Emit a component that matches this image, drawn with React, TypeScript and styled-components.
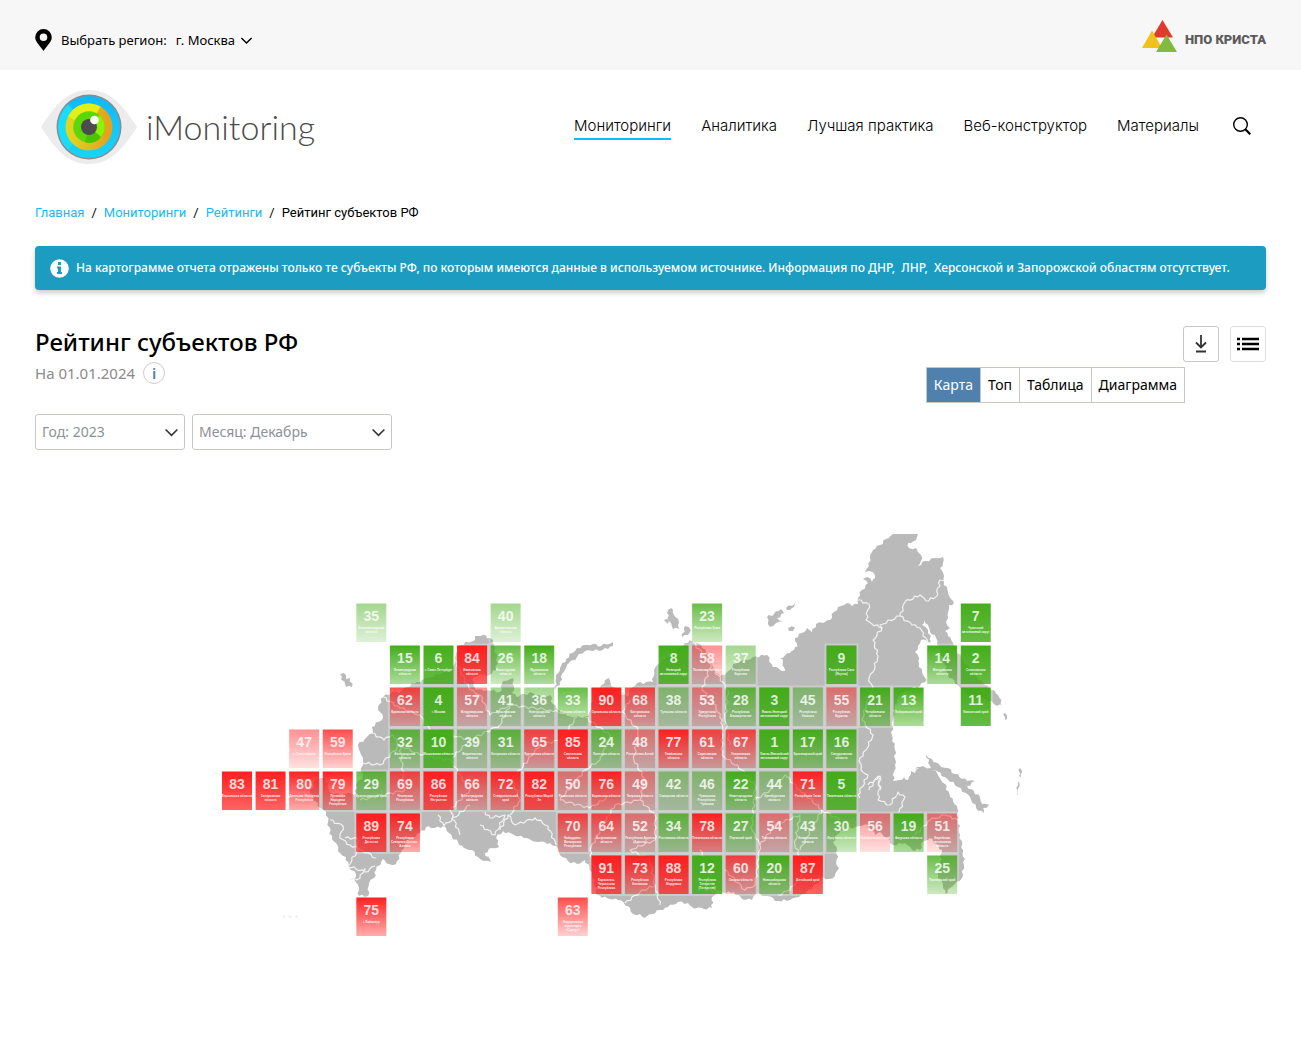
import React from "react";
import styled, { createGlobalStyle } from "styled-components";

const sans = `"Noto Sans", "Open Sans", sans-serif`;

const GlobalStyle = createGlobalStyle`
  *, *::before, *::after { box-sizing: border-box; }
  body { margin: 0; background: #fff; color: #000; font-family: ${sans}; font-size: 13px; line-height: 20px; }
  button, select { font: inherit; color: inherit; }
  a { color: inherit; text-decoration: none; }
`;

const TopBar = styled.div`
  display: flex;
  align-items: center;
  justify-content: space-between;
  height: 70px;
  padding: 0 35px;
  background: #f7f7f7;
`;

const Region = styled.div`
  display: flex;
  align-items: center;
  padding-top: 10px;
  svg { flex: none; }
  label { margin: 0 9px; }
`;

const RegionSelect = styled.span`
  display: flex;
  align-items: center;
  gap: 4px;
  select {
    appearance: none;
    border: 0;
    padding: 0;
    background: transparent;
  }
`;

const Company = styled.a`
  display: flex;
  align-items: center;
  gap: 8px;
  padding-top: 2px;
  color: #5c5c5c;
  font: 900 13px/36px Roboto, "Liberation Sans", sans-serif;
  span { padding-top: 8px; }
`;

const Header = styled.header`
  display: flex;
  align-items: center;
  justify-content: space-between;
  height: 114px;
  padding: 0 35px 0 41px;
`;

const Brand = styled.a`
  display: flex;
  align-items: center;
  gap: 8px;
  color: #4b4b4b;
  font: 300 34px/48px Lato, ${sans};
`;

const Nav = styled.nav`
  display: flex;
  align-items: center;
  gap: 30px;
  padding-bottom: 2px;
`;

const NavLink = styled.a<{ $active?: boolean }>`
  padding-top: 2px;
  border-bottom: 2px solid ${(p) => (p.$active ? "#00bfff" : "transparent")};
  font: 300 15px/24px Inter, ${sans};
`;

const SearchButton = styled.button`
  display: flex;
  width: 26px;
  height: 26px;
  margin-right: 11px;
  padding: 4px;
  border: 0;
  background: none;
`;

const Main = styled.main`
  padding: 19px 35px 40px;
`;

const Crumbs = styled.nav`
  display: flex;
  gap: 7px;
  font-family: Roboto, ${sans};
  a { color: #1cb8f0; }
`;

const Notice = styled.div`
  display: flex;
  align-items: center;
  gap: 7px;
  min-height: 44px;
  margin-top: 23px;
  padding: 0 15px;
  border-radius: 4px;
  background: #1c9cc1;
  box-shadow: 0 3px 5px rgba(0, 0, 0, 0.2);
  color: #fff;
  font-size: 12px;
  font-weight: 500;
  svg { flex: none; }
  p { margin: 0; }
`;

const Heading = styled.div`
  display: flex;
  justify-content: space-between;
  margin-top: 36px;
`;

const Title = styled.h1`
  margin: 0;
  font-size: 24px;
  line-height: 32px;
  font-weight: 500;
`;

const Subtitle = styled.div`
  display: flex;
  align-items: center;
  gap: 8px;
  margin-top: 3px;
  color: #8a8a8a;
  font-size: 15px;
  line-height: 24px;
`;

const InfoButton = styled.button`
  width: 22px;
  height: 22px;
  padding: 0;
  border: 1px solid #ccc;
  border-radius: 50%;
  background: #fff;
  color: #4d7fae;
  font-size: 15px;
  font-weight: 600;
  line-height: 20px;
`;

const Tools = styled.div`
  display: flex;
  flex-direction: column;
  align-items: flex-end;
  gap: 5px;
`;

const ToolButtons = styled.div`
  display: flex;
  gap: 11px;
`;

const ToolButton = styled.button<{ $light?: boolean }>`
  display: flex;
  align-items: center;
  justify-content: center;
  width: 36px;
  height: 36px;
  padding: 0;
  border: 1px solid ${(p) => (p.$light ? "#ddd" : "#c8c8c8")};
  border-radius: 3px;
  background: #fff;
`;

const Tabs = styled.div`
  display: flex;
  margin-right: 81px;
  border: 1px solid #c9c8c0;
`;

const Tab = styled.button<{ $active?: boolean }>`
  height: 34px;
  padding: 0 7px;
  border: 0;
  background: ${(p) => (p.$active ? "#5080ae" : "#fff")};
  color: ${(p) => (p.$active ? "#fff" : "#000")};
  font-size: 14px;
  & + & { border-left: 1px solid #c9c8c0; }
`;

const Filters = styled.div`
  display: flex;
  gap: 7px;
  margin-top: 11px;
`;

const Filter = styled.span<{ $width: number }>`
  display: grid;
  align-items: center;
  width: ${(p) => p.$width}px;
  select, svg { grid-area: 1 / 1; }
  svg { justify-self: end; margin-right: 6px; pointer-events: none; }
  select {
    appearance: none;
    width: 100%;
    height: 36px;
    padding: 0 6px;
    border: 1px solid #c9c8c0;
    border-radius: 3px;
    background: #fff;
    color: #8e9196;
    font-size: 14px;
  }
`;

const MapFigure = styled.figure`
  display: flex;
  justify-content: center;
  margin: 80px 0 0;
  svg { width: 100%; max-width: 860px; height: auto; }
`;

const Rank = styled.text`
  fill: rgba(255, 255, 255, 0.82);
  font: bold 14px "Liberation Sans", sans-serif;
  text-anchor: middle;
`;

const RegionName = styled.text`
  fill: rgba(255, 255, 255, 0.9);
  font: bold 3px "Liberation Sans", sans-serif;
  text-anchor: middle;
`;

const Chevron = ({ size, color }: { size: number; color: string }) => (
  <svg width={size} height={size} viewBox="0 0 14 14" fill="none" stroke={color} strokeWidth="1.5" aria-hidden="true">
    <path d="M1.5 4.2 7 9.7l5.5-5.5" />
  </svg>
);

const EyeLogo = () => (
  <svg width="97" height="76" viewBox="0 0 97 76" aria-hidden="true">
    <defs>
      <linearGradient id="iris" x1="0" y1="0" x2="1" y2="0">
        <stop offset="0.1" stopColor="#dfd51e" />
        <stop offset="0.9" stopColor="#e3a31e" />
      </linearGradient>
      <linearGradient id="rim" x1="0" y1="0" x2="0" y2="1">
        <stop offset="0" stopColor="#10b8fa" />
        <stop offset="1" stopColor="#18d4f8" />
      </linearGradient>
    </defs>
    <path d="M0 38C12 20 24 1 48 1s36 19 48 37C84 56 72 75 48 75S12 56 0 38Z" fill="#ececec" />
    <circle cx="48" cy="38" r="32.5" fill="#8a8a8a" />
    <circle cx="48" cy="38" r="31" fill="url(#rim)" />
    <path d="M48 38 27 15.200A31 31 0 0 0 27 60.800Z" fill="#18dcf8" />
    <circle cx="48" cy="38" r="23.500" fill="url(#iris)" />
    <path d="M48 38 27 27.500A23.500 23.500 0 0 1 59.500 17.500Z" fill="#e4ee18" />
    <circle cx="48" cy="38" r="15.700" fill="#5cd80a" />
    <path d="M48 38 58.500 26.300A15.700 15.700 0 0 1 60 48Z" fill="#8af500" />
    <path d="M48 38 60 48A15.700 15.700 0 0 1 44 53.200Z" fill="#48c400" />
    <circle cx="48" cy="38" r="8" fill="#4c4c4c" />
    <circle cx="53.500" cy="31" r="4.300" fill="#fff" />
  </svg>
);

type Cell = [number, string];
type Run = { row: number; col: number; cells: Cell[] };

const runs: Run[] = [
  { row: 0, col: 4, cells: [[35, "Калининградская|область"]] },
  { row: 0, col: 8, cells: [[40, "Архангельская|область"]] },
  { row: 0, col: 14, cells: [[23, "Республика Коми"]] },
  { row: 0, col: 22, cells: [[7, "Чукотский|автономный округ"]] },
  { row: 1, col: 5, cells: [[15, "Ленинградская|область"], [6, "г. Санкт-Петербург"], [84, "Ивановская|область"], [26, "Вологодская|область"], [18, "Мурманская|область"]] },
  { row: 1, col: 13, cells: [[8, "Ненецкий|автономный округ"], [58, "Псковская область"], [37, "Республика|Карелия"]] },
  { row: 1, col: 18, cells: [[9, "Республика Саха|(Якутия)"]] },
  { row: 1, col: 21, cells: [[14, "Магаданская|область"], [2, "Сахалинская|область"]] },
  { row: 2, col: 5, cells: [[62, "Брянская область"], [4, "г. Москва"], [57, "Владимирская|область"], [41, "Ярославская|область"], [36, "Новгородская|область"], [33, "Курская область"], [90, "Орловская область"], [68, "Костромская|область"], [38, "Тульская область"], [53, "Удмуртская|Республика"], [28, "Республика|Башкортостан"], [3, "Ямало-Ненецкий|автономный округ"], [45, "Республика|Хакасия"], [55, "Республика|Бурятия"], [21, "Челябинская|область"], [13, "Хабаровский край"]] },
  { row: 2, col: 22, cells: [[11, "Камчатский край"]] },
  { row: 3, col: 2, cells: [[47, "г. Севастополь"], [59, "Республика Крым"]] },
  { row: 3, col: 5, cells: [[32, "Белгородская|область"], [10, "Московская область"], [39, "Воронежская|область"], [31, "Калужская область"], [65, "Курганская область"], [85, "Смоленская|область"], [24, "Липецкая область"], [48, "Республика Алтай"], [77, "Тамбовская|область"], [61, "Саратовская|область"], [67, "Ульяновская|область"], [1, "Ханты-Мансийский|автономный округ"], [17, "Красноярский край"], [16, "Свердловская|область"]] },
  { row: 4, col: 0, cells: [[83, "Херсонская область"], [81, "Запорожская|область"], [80, "Донецкая Народная|Республика"], [79, "Луганская|Народная|Республика"], [29, "Краснодарский край"], [69, "Чеченская|Республика"], [86, "Республика|Ингушетия"], [66, "Волгоградская|область"], [72, "Ставропольский|край"], [82, "Республика Марий|Эл"], [50, "Рязанская область"], [76, "Кировская область"], [49, "Тверская область"], [42, "Самарская область"], [46, "Чувашская|Республика -|Чувашия"], [22, "Нижегородская|область"], [44, "Оренбургская|область"], [71, "Республика Тыва"], [5, "Тюменская область"]] },
  { row: 5, col: 4, cells: [[89, "Республика|Дагестан"], [74, "Республика|Северная Осетия -|Алания"]] },
  { row: 5, col: 10, cells: [[70, "Кабардино-|Балкарская|Республика"], [64, "Астраханская|область"], [52, "Республика Адыгея|(Адыгея)"], [34, "Ростовская область"], [78, "Пензенская область"], [27, "Пермский край"], [54, "Томская область"], [43, "Кемеровская|область"], [30, "Иркутская область"], [56, "Забайкальский край"], [19, "Амурская область"], [51, "Еврейская|автономная|область"]] },
  { row: 6, col: 11, cells: [[91, "Карачаево-|Черкесская|Республика"], [73, "Республика|Калмыкия"], [88, "Республика|Мордовия"], [12, "Республика|Татарстан|(Татарстан)"], [60, "Омская область"], [20, "Новосибирская|область"], [87, "Алтайский край"]] },
  { row: 6, col: 21, cells: [[25, "Приморский край"]] },
  { row: 7, col: 4, cells: [[75, "г. Байконур"]] },
  { row: 7, col: 10, cells: [[63, "Федеральная|территория|«Сириус»"]] },
];

const bands = [
  { id: "g1", upTo: 12, color: "#3fab14", top: 0.97, bottom: 0.8 },
  { id: "g2", upTo: 22, color: "#3fab14", top: 0.97, bottom: 0.42 },
  { id: "g3", upTo: 34, color: "#3fab14", top: 0.78, bottom: 0.26 },
  { id: "g4", upTo: 46, color: "#3fab14", top: 0.48, bottom: 0.17 },
  { id: "r4", upTo: 58, color: "#ff1a1a", top: 0.48, bottom: 0.13 },
  { id: "r3", upTo: 70, color: "#ff1a1a", top: 0.78, bottom: 0.2 },
  { id: "r2", upTo: 80, color: "#ff1a1a", top: 0.97, bottom: 0.36 },
  { id: "r1", upTo: 99, color: "#ff1a1a", top: 0.98, bottom: 0.68 },
];

const land = [
  "893,534 918,534 916,540 908,543 909,548 916,548 918,552 921,555 921,561 918,566 926,561 934,558 943,557 943,563 940,568 944,576 944,582 948,592 951,599 954,603 949,605 948,612 948,618 946,622 950,628 945,631 948,636 953,643 956,650 963,660 975,675 985,685 992,690 998,695 1003,706 994,704 985,699 970,695 958,685 948,675 940,650 936,638 930,632 928,625 924,620 922,625 928,630 932,645 926,640 921,640 918,646 915,652 919,658 919,664 922,672 927,680 920,686 905,690 898,697 895,708 893,720 892,735 895,750 895,765 893,781 900,780 904,777 908,780 911,771 915,773 919,768 930,768 937,773 939,777 945,784 950,797 957,806 958,820 960,835 963,850 964,865 962,878 956,882 950,888 945,894 943,885 938,875 942,850 930,838 922,842 920,850 912,850 905,843 893,845 887,838 880,832 875,835 868,825 860,826 855,827 840,830 833,842 837,850 837,866 839,868 835,876 829,879 823,877 816,884 805,894 799,897 790,900 778,901 768,896 756,894 752,900 742,899 734,892 726,893 718,891 712,897 712,908 704,909 692,907 688,903 678,902 668,907 660,910 652,914 644,918 640,914 633,914 630,908 624,903 618,900 610,899 597,895 592,872 585,860 577,864 568,861 560,855 556,846 550,843 539,842 531,840 524,838 514,835 503,831 496,838 499,847 491,848 485,853 491,862 484,861 478,857 472,850 464,848 458,842 452,837 449,833 443,826 435,828 428,826 420,833 408,840 402,850 396,864 389,864 383,859 376,870 374,878 369,883 368,896 359,896 358,885 354,879 356,874 349,868 346,857 340,853 336,843 332,839 328,822 326,812 320,808 310,793 316,780 325,778 330,792 340,795 348,793 356,794 356,785 363,776 361,768 363,761 360,752 358,745 367,737 373,733 372,727 383,718 378,707 383,697 392,692 399,693 407,687 417,682 428,678 442,673 453,670 455,658 460,645 475,640 475,636 483,635 490,638 493,643 497,657 496,670 487,676 480,674 472,680 476,690 487,690 500,692 503,681 513,678 514,686 512,693 517,697 524,694 533,693 541,696 550,695 553,704 558,710 570,716 580,717 588,716 591,706 596,690 610,685 619,692 627,697 630,689 637,683 653,682 654,670 658,664 667,657 678,648 688,643 690,640 693,642 701,645 706,653 710,657 713,667 720,677 725,675 730,670 738,660 747,660 753,657 767,655 773,667 785,671 783,662 780,658 790,653 795,647 800,648 795,641 795,638 802,633 807,628 812,632 816,624 823,623 830,620 834,612 838,607 847,603 852,606 858,604 858,598 862,590 868,583 863,579 867,577 872,582 875,578 875,575 869,571 865,572 869,566 870,558 873,550 880,545 886,539",
  "555,690 556,678 560,668 566,659 577,648 585,645 593,644 601,646 613,642 613,646 608,649 593,651 585,651 577,657 567,665 562,674 560,685",
  "667,613 671,608 674,615 679,622 679,629 673,629 669,621",
  "664,620 669,620 668,624",
  "682,637 685,626 691,630 688,635",
  "767,617 774,614 781,609 784,613 777,618 783,621 776,623 770,627",
  "786,608 795,603 794,607 787,610",
  "788,628 795,627 793,631 789,631",
  "340,674 344,673 346,679 350,678 352,687 346,687",
  "600,689 605,680 609,678 611,685",
  "915,769 920,767 931,768 926,755 932,759 941,767 948,768 955,774 967,781 975,781 967,786 980,797 982,804 989,805 983,808 984,813 976,808 970,797 958,787 945,777 935,770",
  "1003,714 1005,713 1007,719 1005,720",
  "1020,768 1021,769 1021,777 1019,776",
  "1018,782 1019,782 1018,795 1017,794",
];

const borders = [
  "858,600 869,604 866,620 872,624 882,628 880,625 900,616 905,602 920,595 926,601 936,597 940,580 944,581",
  "882,628 873,640 878,656 873,672 869,678 873,690 866,705 862,720 873,735 866,750 860,758 861,770 868,775 858,795 860,798",
  "900,616 912,625 920,628 928,643",
  "868,785 880,776 878,800 890,805 898,792 905,797 899,812",
  "869,790 878,776 880,790",
  "693,642 711,664 702,690 712,700 722,720 722,755 742,770 755,785 752,830 760,845",
  "713,668 728,690 725,720 730,745",
  "630,700 622,712 638,730 634,760 645,780 640,800 615,805 600,830 590,850",
  "590,850 595,872",
  "480,695 490,715 510,705 550,710 577,717 560,740 540,745 528,760",
  "510,705 500,725 470,740 450,760 420,755 400,745",
  "372,733 384,740 392,735 400,745 380,765 363,763",
  "383,697 400,708 420,715 430,730 452,735 470,740",
  "450,760 470,790 450,810 460,835",
  "438,815 444,826 470,805",
  "500,830 508,815 515,825 535,818 548,826 556,845",
  "480,825 495,835 505,815 490,818 485,812",
  "528,760 512,780 520,800 510,815",
  "330,820 343,826 340,838 350,845 362,850 376,858",
  "345,838 357,838 358,850 348,866 365,872 375,866",
  "350,880 360,878 365,868",
  "640,800 655,815 655,840 630,850 650,860 655,885 660,905",
  "655,885 640,892 625,903",
  "755,800 770,790 785,775 800,790 822,810 840,820",
  "760,845 775,825 800,815 795,845 805,870 790,890 778,895",
  "700,850 712,870 705,890 725,893",
  "725,870 745,890 755,885 760,845",
  "585,717 610,735 600,760 585,770 560,800",
  "560,800 590,808 610,796",
  "822,810 800,850",
  "400,745 405,790 360,800",
  "455,660 470,690 480,695",
  "915,835 930,820 945,815 958,820",
];

/* Splits every edge and shifts its middle a little, so that coasts and borders look natural. */
const rough = (points: string, closed: boolean) => {
  const p = points.split(" ").map((s) => s.split(",").map(Number));
  const parts: string[] = [];
  const count = closed ? p.length : p.length - 1;
  for (let i = 0; i < count; i++) {
    const [x, y] = p[i];
    const [u, v] = p[(i + 1) % p.length];
    const length = Math.hypot(u - x, v - y);
    const steps = Math.max(1, Math.round(length / 3));
    for (let k = 0; k < steps; k++) {
      const t = k / steps;
      const shift = k === 0 || y < 535 ? 0 : Math.sin(i * 7.3 + k * 4.1) * 1.3;
      parts.push(`${(x + (u - x) * t - ((v - y) / length) * shift).toFixed(1)} ${(y + (v - y) * t + ((u - x) / length) * shift).toFixed(1)}`);
    }
  }
  if (!closed) parts.push(p[p.length - 1].join(" "));
  return `M${parts.join("L")}${closed ? "Z" : ""}`;
};

const RatingMap = () => (
  <MapFigure>
    <svg viewBox="221 530 860 420" role="img" aria-label="Карта">
      <defs>
        {bands.map((b) => (
          <linearGradient key={b.id} id={b.id} x1="0" y1="0" x2="0" y2="1">
            <stop offset="0" stopColor={b.color} stopOpacity={b.top} />
            <stop offset="1" stopColor={b.color} stopOpacity={b.bottom} />
          </linearGradient>
        ))}
      </defs>
      <g fill="#bababa">
        {land.map((l) => (
          <path key={l} d={rough(l, true)} />
        ))}
      </g>
      <g fill="none" stroke="#f2f2f2" strokeWidth="1.200" strokeLinejoin="round">
        {borders.map((b) => (
          <path key={b} d={rough(b, false)} />
        ))}
      </g>
      <g fill="#f0f0f0">
        <circle cx="284" cy="916.500" r="1.500" />
        <circle cx="290" cy="916.500" r="1.500" />
        <circle cx="296.500" cy="916.500" r="1.500" />
      </g>
      {runs.flatMap(({ row, col, cells }) =>
        cells.map(([rank, name], i) => {
          const x = 222 + (col + i) * 33.58;
          const y = 603.5 + row * 42;
          const band = bands.find((b) => rank <= b.upTo)!;
          return (
            <g key={rank}>
              <rect x={x - 1} y={y - 1} width="32" height="40.500" fill="none" stroke="#fff" strokeOpacity="0.25" strokeWidth="2" />
              <rect x={x} y={y} width="30" height="38.500" fill={`url(#${band.id})`} />
              <Rank x={x + 15} y={y + 17.5}>{rank}</Rank>
              {name.split("|").map((line, n) => (
                <RegionName key={line} x={x + 15} y={y + 25 + n * 4}>{line}</RegionName>
              ))}
            </g>
          );
        })
      )}
    </svg>
  </MapFigure>
);

export default function App() {
  return (
    <>
      <GlobalStyle />
      <TopBar>
        <Region>
          <svg width="17" height="22" viewBox="0 0 17 22" aria-hidden="true">
            <path fillRule="evenodd" d="M8.500 0A8.300 8.300 0 0 0 .2 8.300C.2 13 5 16.500 8.500 22c3.500-5.500 8.300-9 8.300-13.700A8.300 8.300 0 0 0 8.500 0Zm0 4.500a3.800 3.800 0 1 1 0 7.600 3.800 3.800 0 0 1 0-7.600Z" />
          </svg>
          <label htmlFor="region">Выбрать регион:</label>
          <RegionSelect>
            <select id="region">
              <option>г. Москва</option>
            </select>
            <Chevron size={13} color="#000" />
          </RegionSelect>
        </Region>
        <Company href="#">
          <svg width="36" height="34" viewBox="0 0 36 34" aria-hidden="true">
            <path d="M21.500 1 32 18.500H11Z" fill="#e03a2c" />
            <path d="M11 11.500 21 29H1Z" fill="#f0c31c" />
            <path d="M25.500 15.500 36 33H15Z" fill="#82ba41" />
          </svg>
          <span>НПО КРИСТА</span>
        </Company>
      </TopBar>
      <Header>
        <Brand href="#">
          <EyeLogo />
          iMonitoring
        </Brand>
        <Nav>
          <NavLink href="#" $active>Мониторинги</NavLink>
          <NavLink href="#">Аналитика</NavLink>
          <NavLink href="#">Лучшая практика</NavLink>
          <NavLink href="#">Веб-конструктор</NavLink>
          <NavLink href="#">Материалы</NavLink>
          <SearchButton aria-label="Поиск">
            <svg width="18" height="18" viewBox="0 0 18 18" fill="none" stroke="#000" aria-hidden="true">
              <circle cx="7.500" cy="7.500" r="6.800" strokeWidth="1.400" />
              <path d="m12.300 12.300 5 5" strokeWidth="2.200" />
            </svg>
          </SearchButton>
        </Nav>
      </Header>
      <Main>
        <Crumbs>
          <a href="#">Главная</a>
          <span>/</span>
          <a href="#">Мониторинги</a>
          <span>/</span>
          <a href="#">Рейтинги</a>
          <span>/</span>
          <span>Рейтинг субъектов РФ</span>
        </Crumbs>
        <Notice>
          <svg width="19" height="19" viewBox="0 0 19 19" aria-hidden="true">
            <circle cx="9.500" cy="9.500" r="9.300" fill="#fff" />
            <path d="M8 3h3v3H8zM7 7.500h4V13h1v2H7v-2h1V9.500H7z" fill="#1c9cc1" />
          </svg>
          <p>
            На картограмме отчета отражены только те субъекты РФ, по которым имеются данные в используемом источнике.
            Информация по ДНР,&nbsp; ЛНР,&nbsp; Херсонской и Запорожской областям отсутствует.
          </p>
        </Notice>
        <Heading>
          <div>
            <Title>Рейтинг субъектов РФ</Title>
            <Subtitle>
              На 01.01.2024
              <InfoButton>i</InfoButton>
            </Subtitle>
          </div>
          <Tools>
            <ToolButtons>
              <ToolButton aria-label="Скачать">
                <svg width="14" height="18" viewBox="0 0 14 18" fill="none" stroke="#333" strokeWidth="1.800" aria-hidden="true">
                  <path d="M7 0v12M2 7.500l5 5 5-5M2 16.500h10" />
                </svg>
              </ToolButton>
              <ToolButton $light aria-label="Список">
                <svg width="22" height="14" viewBox="0 0 22 14" fill="none" stroke="#000" strokeWidth="2.500" aria-hidden="true">
                  <path d="M0 2h3M5 2h17M0 7h3M5 7h17M0 12h3M5 12h17" />
                </svg>
              </ToolButton>
            </ToolButtons>
            <Tabs>
              <Tab $active>Карта</Tab>
              <Tab>Топ</Tab>
              <Tab>Таблица</Tab>
              <Tab>Диаграмма</Tab>
            </Tabs>
          </Tools>
        </Heading>
        <Filters>
          <Filter $width={150}>
            <select aria-label="Год">
              <option>Год: 2023</option>
            </select>
            <Chevron size={15} color="#333" />
          </Filter>
          <Filter $width={200}>
            <select aria-label="Месяц">
              <option>Месяц: Декабрь</option>
            </select>
            <Chevron size={15} color="#333" />
          </Filter>
        </Filters>
        <RatingMap />
      </Main>
    </>
  );
}
